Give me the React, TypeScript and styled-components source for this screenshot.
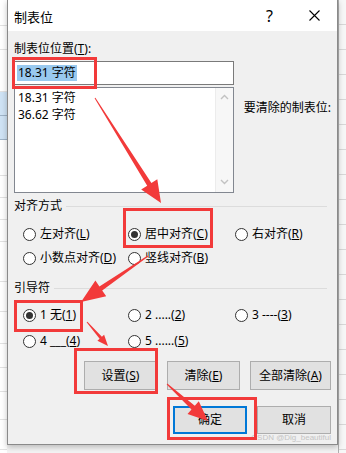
import React from 'react';
import styled, { createGlobalStyle } from 'styled-components';

const GlobalStyle = createGlobalStyle`
  html, body {
    margin: 0;
    padding: 0;
    background: #ffffff;
  }
  body {
    font-family: "Noto Sans", "Noto Sans CJK SC", sans-serif;
    font-size: 12px;
    color: #000;
  }
`;

const RED = '#f23a3a';

// 批注用的红框和箭头（屏幕截图上画的标记）
const boxes = [
  { x: 12, y: 57, w: 85, h: 32 },
  { x: 123, y: 208, w: 90, h: 40 },
  { x: 14, y: 300, w: 69, h: 32 },
  { x: 74, y: 348, w: 84, h: 46 },
  { x: 167, y: 397, w: 90, h: 43 }
];

const arrows = [
  { x1: 95, y1: 98, x2: 161, y2: 203, ws: 1, we: 5, hl: 22, hw: 19 },
  { x1: 148, y1: 256, x2: 81, y2: 302, ws: 1, we: 5, hl: 24, hw: 19 },
  { x1: 87, y1: 322, x2: 108, y2: 346, ws: 1, we: 3, hl: 11, hw: 9 },
  { x1: 167, y1: 384, x2: 208, y2: 421, ws: 1, we: 5, hl: 20, hw: 17 }
];

function arrowPoints(a: (typeof arrows)[number]) {
  const dx = a.x2 - a.x1;
  const dy = a.y2 - a.y1;
  const len = Math.sqrt(dx * dx + dy * dy);
  const ux = dx / len;
  const uy = dy / len;
  const nx = -uy;
  const ny = ux;
  const bx = a.x2 - ux * a.hl;
  const by = a.y2 - uy * a.hl;
  const p = (x: number, y: number) => `${x.toFixed(1)},${y.toFixed(1)}`;
  return [
    p(a.x1 + (nx * a.ws) / 2, a.y1 + (ny * a.ws) / 2),
    p(bx + (nx * a.we) / 2, by + (ny * a.we) / 2),
    p(bx + (nx * a.hw) / 2, by + (ny * a.hw) / 2),
    p(a.x2, a.y2),
    p(bx - (nx * a.hw) / 2, by - (ny * a.hw) / 2),
    p(bx - (nx * a.we) / 2, by - (ny * a.we) / 2),
    p(a.x1 - (nx * a.ws) / 2, a.y1 - (ny * a.ws) / 2)
  ].join(' ');
}

// 背后文档露出来的一条：高度和是否是蓝色选区
const leftRows = [
  { h: 26 }, { h: 24 }, { h: 42 }, { h: 24, sel: true }, { h: 24, sel: true },
  { h: 36 }, { h: 22 }, { h: 22 }, { h: 22 }, { h: 40 }, { h: 30 }, { h: 32 },
  { h: 24 }, { h: 24 }, { h: 28 }, { h: 30 }
];

function Radio({ checked, children }: { checked?: boolean; children: React.ReactNode }) {
  return (
    <RadioItem>
      <RadioCircle $checked={checked} />
      <span>{children}</span>
    </RadioItem>
  );
}

function Chevron({ down }: { down?: boolean }) {
  return (
    <svg width="9" height="6" viewBox="0 0 9 6">
      <path
        d={down ? 'M1 1 L4.5 4.5 L8 1' : 'M1 5 L4.5 1.5 L8 5'}
        fill="none"
        stroke="#c2c2c2"
        strokeWidth="1.4"
      />
    </svg>
  );
}

function App() {
  return (
    <>
      <GlobalStyle />
      <Page>
        <LeftStrip>
          {leftRows.map((r, i) => (
            <StripRow key={i} $h={r.h} $sel={r.sel} />
          ))}
        </LeftStrip>
        <Dialog>
          <TitleBar>
            <Title>制表位</Title>
            <TitleBtn>?</TitleBtn>
            <TitleBtn>
              <svg width="11" height="11" viewBox="0 0 11 11">
                <path d="M0.5 0.5 L10.5 10.5 M10.5 0.5 L0.5 10.5" stroke="#000" strokeWidth="1.1" />
              </svg>
            </TitleBtn>
          </TitleBar>
          <Body>
            <TopRow>
              <LeftCol>
                <Label>
                  制表位位置(<u>T</u>):
                </Label>
                <TextInput>
                  <Selected>18.31 字符</Selected>
                </TextInput>
                <ListBox>
                  <ListItems>
                    <ListItem>18.31 字符</ListItem>
                    <ListItem>36.62 字符</ListItem>
                  </ListItems>
                  <ScrollBar>
                    <Chevron />
                    <Chevron down />
                  </ScrollBar>
                </ListBox>
              </LeftCol>
              <RightCol>要清除的制表位:</RightCol>
            </TopRow>

            <GroupHeader>
              <span>对齐方式</span>
              <GroupLine />
            </GroupHeader>
            <RadioGrid>
              <Radio>
                左对齐(<u>L</u>)
              </Radio>
              <Radio checked>
                居中对齐(<u>C</u>)
              </Radio>
              <Radio>
                右对齐(<u>R</u>)
              </Radio>
              <Radio>
                小数点对齐(<u>D</u>)
              </Radio>
              <Radio>
                竖线对齐(<u>B</u>)
              </Radio>
            </RadioGrid>

            <GroupHeader $top={10}>
              <span>引导符</span>
              <GroupLine />
            </GroupHeader>
            <RadioGrid $top={7} $gap={2}>
              <Radio checked>
                1 无(<u>1</u>)
              </Radio>
              <Radio>
                2 .....(<u>2</u>)
              </Radio>
              <Radio>
                3 ----(<u>3</u>)
              </Radio>
              <Radio>
                4 ___(<u>4</u>)
              </Radio>
              <Radio>
                5 ......(<u>5</u>)
              </Radio>
            </RadioGrid>

            <ButtonRow $top={8}>
              <Button $w={73}>
                设置(<u>S</u>)
              </Button>
              <Button $w={73}>
                清除(<u>E</u>)
              </Button>
              <Button $w={81}>
                全部清除(<u>A</u>)
              </Button>
            </ButtonRow>
            <ButtonRow $top={16}>
              <Button $w={74} $h={28} $default>
                确定
              </Button>
              <Button $w={74} $h={28}>
                取消
              </Button>
            </ButtonRow>
          </Body>
          <Watermark>CSDN @Dig_beautiful</Watermark>
        </Dialog>
        <RightStrip>
          {Array.from({ length: 18 }).map((_, i) => (
            <RightLine key={i} />
          ))}
        </RightStrip>

        <Overlay width="346" height="453" viewBox="0 0 346 453">
          {boxes.map((b, i) => (
            <rect
              key={i}
              x={b.x + 1.5}
              y={b.y + 1.5}
              width={b.w - 3}
              height={b.h - 3}
              fill="none"
              stroke={RED}
              strokeWidth="3"
            />
          ))}
          {arrows.map((a, i) => (
            <polygon key={i} points={arrowPoints(a)} fill={RED} />
          ))}
        </Overlay>
      </Page>
    </>
  );
}

const Page = styled.div`
  position: relative;
  display: flex;
  width: 346px;
  height: 453px;
  overflow: hidden;
  background: #f4f4f4;
`;

const LeftStrip = styled.div`
  width: 7px;
  flex-shrink: 0;
  overflow: hidden;
  background: #ffffff;
  display: flex;
  flex-direction: column;
`;

const StripRow = styled.div<{ $h: number; $sel?: boolean }>`
  flex-shrink: 0;
  height: ${(p) => p.$h}px;
  box-sizing: border-box;
  background: ${(p) => (p.$sel ? '#cfe3f5' : '#ffffff')};
  border-bottom: 1px solid ${(p) => (p.$sel ? '#9fb4c8' : '#e2e2e2')};
`;

const RightStrip = styled.div`
  width: 8px;
  flex-shrink: 0;
  background: #f7f7f7;
  border-left: 1px solid #b0b0b0;
  display: flex;
  flex-direction: column;
`;

const RightLine = styled.div`
  height: 24px;
  border-bottom: 1px solid #d8d8d8;
`;

const Dialog = styled.div`
  position: relative;
  width: 331px;
  height: 445px;
  flex-shrink: 0;
  box-sizing: border-box;
  border: 1px solid #8a8a8a;
  border-top: none;
  background: #f0f0f0;
  box-shadow: 0 2px 6px rgba(0, 0, 0, 0.25);
  display: flex;
  flex-direction: column;
`;

const TitleBar = styled.div`
  height: 31px;
  background: #ffffff;
  display: flex;
  align-items: center;
  padding-left: 6px;
`;

const Title = styled.div`
  flex: 1;
  font-family: "Noto Sans CJK SC", sans-serif;
  font-size: 13px;
  margin-top: 1px;
`;

const TitleBtn = styled.div`
  width: 45px;
  height: 31px;
  display: flex;
  align-items: center;
  justify-content: center;
  font-family: "Noto Sans", sans-serif;
  font-size: 16px;
`;

const Body = styled.div`
  padding: 10px 6px 0 6px;
  display: flex;
  flex-direction: column;
  font-family: "Noto Sans", "Noto Sans CJK SC", sans-serif;
  font-size: 12px;
  line-height: 16px;
`;

const TopRow = styled.div`
  display: flex;
`;

const LeftCol = styled.div`
  width: 221px;
  display: flex;
  flex-direction: column;
`;

const RightCol = styled.div`
  margin-left: 10px;
  padding-top: 59px;
  white-space: nowrap;
`;

const Label = styled.div`
  height: 16px;
  margin-bottom: 4px;
`;

const TextInput = styled.div`
  box-sizing: border-box;
  height: 24px;
  background: #fff;
  border: 1px solid #7a7a7a;
  padding: 2px 2px;
  display: flex;
  align-items: center;
`;

const Selected = styled.span`
  background: #99c9ef;
  line-height: 16px;
  padding: 0 1px;
`;

const ListBox = styled.div`
  box-sizing: border-box;
  margin-top: 2px;
  height: 106px;
  background: #fff;
  border: 1px solid #828790;
  display: flex;
`;

const ListItems = styled.div`
  flex: 1;
  padding: 1px 3px;
`;

const ListItem = styled.div`
  height: 17px;
  line-height: 17px;
`;

const ScrollBar = styled.div`
  width: 17px;
  background: #f7f7f7;
  border-left: 1px solid #ececec;
  display: flex;
  flex-direction: column;
  justify-content: space-between;
  align-items: center;
  padding: 6px 0 7px;
`;

const GroupHeader = styled.div<{ $top?: number }>`
  margin-top: ${(p) => p.$top ?? 5}px;
  display: flex;
  align-items: center;
  gap: 4px;
  height: 16px;
`;

const GroupLine = styled.div`
  flex: 1;
  height: 1px;
  background: #dcdcdc;
  margin-right: 4px;
`;

const RadioGrid = styled.div<{ $top?: number; $gap?: number }>`
  margin-top: ${(p) => p.$top ?? 8}px;
  padding-left: 9px;
  display: grid;
  grid-template-columns: 105px 107px auto;
  grid-auto-rows: 24px;
  row-gap: ${(p) => p.$gap ?? 0}px;
`;

const RadioItem = styled.div`
  display: flex;
  align-items: center;
  gap: 4px;
  white-space: nowrap;
`;

const RadioCircle = styled.span<{ $checked?: boolean }>`
  box-sizing: border-box;
  width: 13px;
  height: 13px;
  border-radius: 50%;
  border: 1px solid #333;
  background: #fff;
  display: flex;
  align-items: center;
  justify-content: center;
  flex-shrink: 0;
  &::after {
    content: '';
    width: 7px;
    height: 7px;
    border-radius: 50%;
    background: ${(p) => (p.$checked ? '#333' : 'transparent')};
  }
`;

const ButtonRow = styled.div<{ $top: number }>`
  margin-top: ${(p) => p.$top}px;
  display: flex;
  justify-content: flex-end;
  gap: 10px;
`;

const Button = styled.div<{ $w: number; $h?: number; $default?: boolean }>`
  box-sizing: border-box;
  width: ${(p) => p.$w}px;
  height: ${(p) => p.$h ?? 29}px;
  background: #e1e1e1;
  border: ${(p) => (p.$default ? '2px solid #0078d7' : '1px solid #adadad')};
  display: flex;
  align-items: center;
  justify-content: center;
  white-space: nowrap;
`;

const Watermark = styled.div`
  position: absolute;
  right: 6px;
  bottom: 2px;
  font-family: "Liberation Sans", sans-serif;
  font-size: 8px;
  color: #c4c4c4;
`;

const Overlay = styled.svg`
  position: absolute;
  left: 0;
  top: 0;
  pointer-events: none;
`;

export default App;
